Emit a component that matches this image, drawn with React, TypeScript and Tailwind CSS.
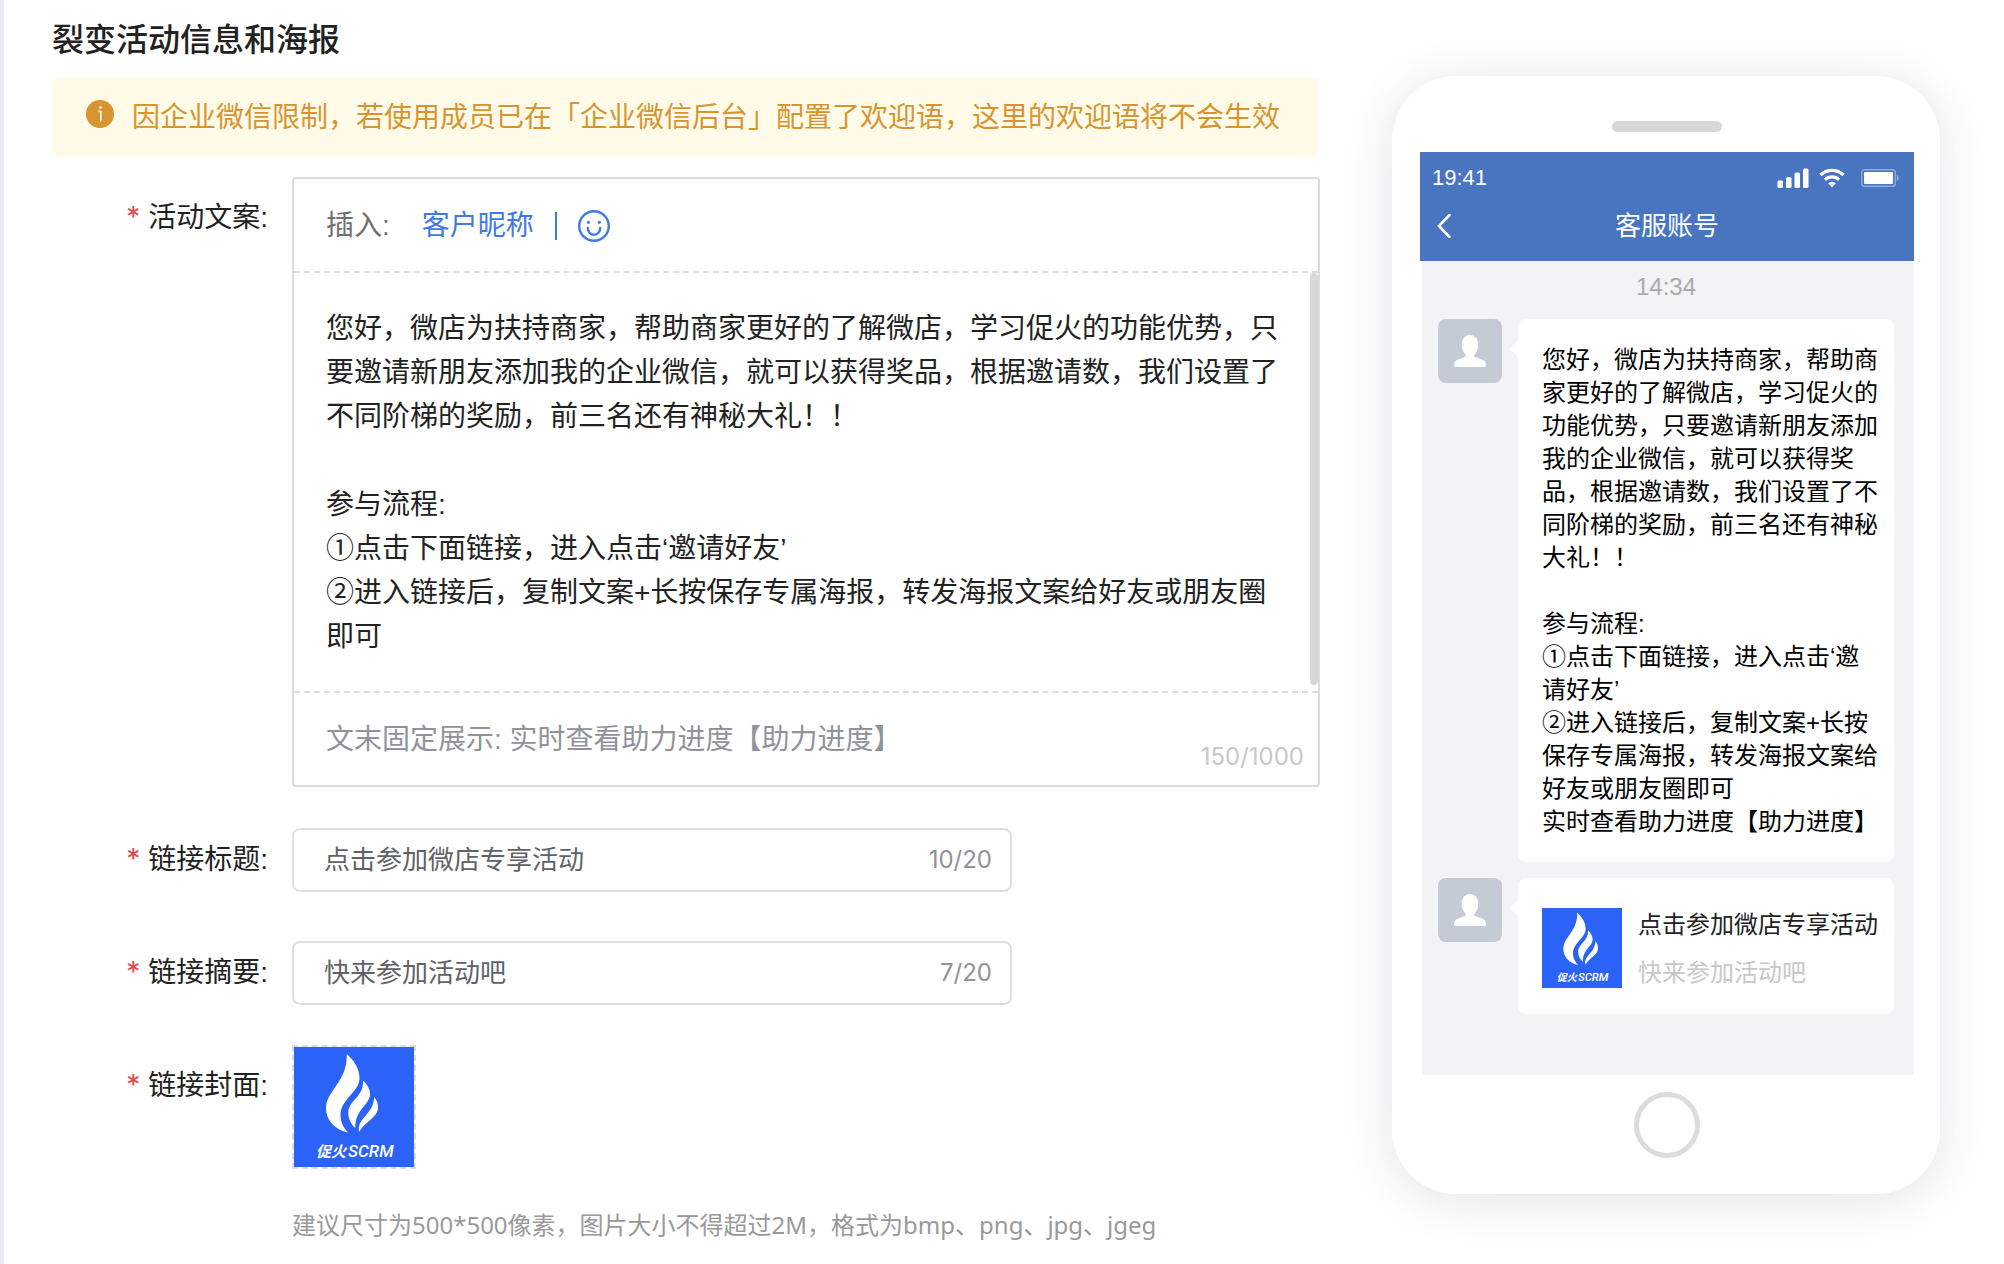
import { useState } from "react";

const initialContent = `您好，微店为扶持商家，帮助商家更好的了解微店，学习促火的功能优势，只要邀请新朋友添加我的企业微信，就可以获得奖品，根据邀请数，我们设置了不同阶梯的奖励，前三名还有神秘大礼！！

参与流程:
①点击下面链接，进入点击‘邀请好友’
②进入链接后，复制文案+长按保存专属海报，转发海报文案给好友或朋友圈即可`;

const fixedEnding = "实时查看助力进度【助力进度】";

function InfoIcon() {
    return (
        <svg viewBox="0 0 28 28" className="mb-1.5 h-7 w-7 shrink-0" aria-hidden="true">
            <circle cx="14" cy="14" r="14" fill="#d8942f" />
            <circle cx="14.5" cy="7.5" r="1.3" fill="#fff" />
            <path d="M12.5 11.5h2.3v10" fill="none" stroke="#fff" strokeWidth="1.6" />
        </svg>
    );
}

function SmileIcon() {
    return (
        <svg viewBox="0 0 32 32" className="h-8 w-8" fill="none" stroke="currentColor" strokeWidth="2.4" aria-hidden="true">
            <circle cx="16" cy="16" r="14.8" />
            <path d="M9.8 18a6.2 6.8 0 0 0 12.4 0" strokeLinecap="round" />
            <circle cx="10.4" cy="12.3" r="1.6" fill="currentColor" stroke="none" />
            <circle cx="21.4" cy="12.3" r="1.6" fill="currentColor" stroke="none" />
        </svg>
    );
}

function BrandLogo({ className }: { className: string }) {
    return (
        <svg viewBox="0 0 120 120" className={className} role="img" aria-label="促火SCRM">
            <rect width="120" height="120" fill="#2b62f7" />
            <g fill="#fff">
                <path d="M52.7 7C60 13 65.5 22 65.5 31C65.5 45 46.5 52 46.5 68C46.5 76 50 81 54 85.5C42 83 32 74 32 61C32 44 54 34 52.7 7Z" />
                <path d="M69 33.7C73 37 76 42 76 47C76 58 61 62 61.3 81C57 77 54.3 72 54.3 66C54.3 53 70 50 69 33.7Z" />
                <path d="M80 50C83 53 84.2 57 84 61C83.5 71 70 75 65.3 85C62 71 80.5 67 80 50Z" />
                <text x="22" y="110" fontSize="15" fontStyle="italic" fontWeight="700" fontFamily="'Noto Sans CJK SC', sans-serif">促火</text>
                <text x="54" y="110" fontSize="17" fontStyle="italic" fontWeight="500" fontFamily="Roboto, sans-serif">SCRM</text>
            </g>
        </svg>
    );
}

function StatusIcons() {
    return (
        <div className="flex items-center pt-0.5 text-white">
            <svg viewBox="0 0 32 20" className="mr-2.5 h-5 w-8" fill="currentColor" aria-hidden="true">
                <rect x="0.5" y="12.5" width="5.5" height="7.5" rx="1.5" />
                <rect x="9" y="9" width="5.5" height="11" rx="1.5" />
                <rect x="17.5" y="4.5" width="5.5" height="15.5" rx="1.5" />
                <rect x="26" y="0.5" width="5.5" height="19.5" rx="1.5" />
            </svg>
            <svg viewBox="0 0 26 20" className="mr-4 h-5 w-[26px]" fill="none" stroke="currentColor" aria-hidden="true">
                <path d="M1.5 7a16.5 16.5 0 0 1 23 0" strokeWidth="3.4" />
                <path d="M6 11.8a10 10 0 0 1 14 0" strokeWidth="3.2" />
                <path d="M13 19.5l-3.8-4.2a5.5 5.5 0 0 1 7.6 0z" fill="currentColor" stroke="none" />
            </svg>
            <svg viewBox="0 0 38 18" className="h-[18px] w-[38px]" aria-hidden="true">
                <rect x="0.8" y="0.8" width="33.4" height="16.4" rx="2.5" fill="none" stroke="#fff" strokeOpacity="0.4" strokeWidth="1.4" />
                <rect x="3" y="3" width="29" height="12" rx="1" fill="#fff" />
                <path d="M36 6c2.2 1 2.2 5 0 6z" fill="#fff" fillOpacity="0.45" />
            </svg>
        </div>
    );
}

function Avatar() {
    return (
        <div className="flex h-16 w-16 shrink-0 items-center justify-center rounded-lg bg-[#c5cbd5]">
            <svg viewBox="0 0 32 32" className="h-8 w-8" fill="#fff" aria-hidden="true">
                <path d="M16 0c5 0 8.3 4.3 8.3 10 0 4.6-2 7.6-4 10-.6 1 0 1.700 1 2.100l6.500 2.500C31 26 32 27.500 32 30c0 1.300-.7 2-2 2H2c-1.300 0-2-.7-2-2 0-2.500 1-4 4.200-5.400l6.500-2.500c1-.4 1.600-1.100 1-2.100-2-2.400-4-5.400-4-10C7.700 4.300 11 0 16 0z" />
            </svg>
        </div>
    );
}

function Message({ children }: { children: React.ReactNode }) {
    return (
        <div className="flex">
            <Avatar />
            {/* Bubble arrow */}
            <svg viewBox="0 0 8 16" className="mt-[22px] ml-2 h-4 w-2 shrink-0" fill="#fff" aria-hidden="true">
                <path d="M8 0v16L0 8z" />
            </svg>
            <div className="min-w-0 flex-1 rounded-lg bg-white">{children}</div>
        </div>
    );
}

function FieldLabel({ htmlFor, tall, children }: { htmlFor: string; tall?: boolean; children: string }) {
    return (
        <label
            htmlFor={htmlFor}
            className={`w-60 shrink-0 pr-6 text-right text-[28px] text-[#222] ${tall ? "leading-[82px]" : "leading-[64px]"}`}
        >
            <span className="mr-2 font-[Inter,sans-serif] leading-none text-[#e04b4b]">*</span>
            {children}:
        </label>
    );
}

interface CountedInputProps {
    id: string;
    value: string;
    onChange: (value: string) => void;
}

function CountedInput({ id, value, onChange }: CountedInputProps) {
    return (
        <div className="flex h-16 w-[720px] items-center rounded-lg border-2 border-[#dcdfe6] pr-[18px] pl-[30px]">
            <input
                id={id}
                type="text"
                maxLength={20}
                value={value}
                onChange={(e) => onChange(e.target.value)}
                className="min-w-0 flex-1 bg-transparent text-[26px] text-[#606266] outline-none"
            />
            <span className="font-[Inter,sans-serif] text-2xl text-[#909399]">{value.length}/20</span>
        </div>
    );
}

interface PhonePreviewProps {
    content: string;
    title: string;
    summary: string;
}

function PhonePreview({ content, title, summary }: PhonePreviewProps) {
    return (
        <aside className="mt-[76px] flex w-[548px] shrink-0 flex-col items-center self-start rounded-[64px] bg-white pr-[26px] pb-9 pl-7 shadow-[0_6px_48px_rgba(30,35,60,0.13)]">
            <div className="mt-[45px] h-[11px] w-[110px] rounded-full bg-[#d8d8d8]" />

            <div className="mt-5 w-full">
                <header className="h-[109px] bg-[#4874c0] text-white">
                    <div className="flex h-[50px] items-center justify-between pr-[15px] pl-3">
                        <span className="text-[22px]">19:41</span>
                        <StatusIcons />
                    </div>
                    <div className="grid h-12 grid-cols-[64px_1fr_64px] items-center">
                        <button type="button" aria-label="返回" className="pl-4">
                            <svg viewBox="0 0 16 24" className="h-6 w-4" fill="none" stroke="currentColor" strokeWidth="2.6" aria-hidden="true">
                                <path d="M13.5 1L3 12l10.5 11" strokeLinecap="round" />
                            </svg>
                        </button>
                        <h2 className="text-center text-[26px]">客服账号</h2>
                    </div>
                </header>

                <div className="ml-0.5 bg-[#f3f3f6] pr-5 pb-[61px] pl-4">
                    <p className="h-[58px] text-center text-2xl leading-[52px] text-[#aaa]">14:34</p>
                    <div className="flex flex-col gap-4">
                        <Message>
                            <p className="py-6 pr-4 pl-6 text-2xl leading-[33px] whitespace-pre-wrap text-black">
                                {content}
                                {"\n"}
                                {fixedEnding}
                            </p>
                        </Message>
                        <Message>
                            <div className="flex gap-4 pt-[30px] pr-4 pb-6 pl-6">
                                <BrandLogo className="h-20 w-20 shrink-0" />
                                <div className="flex min-w-0 flex-col gap-3.5 text-2xl leading-[34px]">
                                    <p className="truncate text-[#222]">{title}</p>
                                    <p className="truncate text-[#c8c8c8]">{summary}</p>
                                </div>
                            </div>
                        </Message>
                    </div>
                </div>
            </div>

            <div className="mt-[17px] h-[66px] w-[66px] rounded-full border-[5px] border-[#dcdcdc]" />
        </aside>
    );
}

export default function App() {
    const [content, setContent] = useState(initialContent);
    const [title, setTitle] = useState("点击参加微店专享活动");
    const [summary, setSummary] = useState("快来参加活动吧");

    return (
        <div className="flex min-h-screen gap-[72px] border-l-4 border-[#ebebf1] bg-white pr-16 pl-12 font-['Liberation_Sans','Noto_Sans_CJK_SC',sans-serif]">
            <main className="min-w-0 flex-1 pt-[18px] pb-5">
                <h1 className="text-[32px] leading-11 font-medium text-[#222]">裂变活动信息和海报</h1>

                {/* Notice */}
                <div className="mt-[15px] mr-0.5 flex h-20 items-center gap-[18px] rounded-lg bg-[#fffbe8] pl-[34px]">
                    <InfoIcon />
                    <p className="pt-0.5 text-[28px] text-[#d8942f]">
                        因企业微信限制，若使用成员已在「企业微信后台」配置了欢迎语，这里的欢迎语将不会生效
                    </p>
                </div>

                {/* Message editor */}
                <div className="mt-5 flex">
                    <FieldLabel htmlFor="content" tall>活动文案</FieldLabel>
                    <div className="min-w-0 flex-1 rounded border-2 border-[#dcdcdc]">
                        <div className="flex h-[94px] items-center border-b-2 border-dashed border-[#dcdcdc] pt-0.5 pl-8 text-[28px] text-[#4179e8]">
                            <span className="text-[#707070]">插入:</span>
                            <button type="button" className="ml-8">客户昵称</button>
                            <span className="mx-[21px] h-7 w-0.5 bg-[#4179e8]" />
                            <button type="button" aria-label="表情">
                                <SmileIcon />
                            </button>
                        </div>
                        <div className="relative">
                            <textarea
                                id="content"
                                value={content}
                                onChange={(e) => setContent(e.target.value)}
                                className="block h-[418px] w-full resize-none overflow-hidden px-8 pt-[34px] text-[28px] leading-11 text-[#222] outline-none"
                            />
                            <div className="absolute top-0 right-0 h-[412px] w-2 rounded-full bg-[#d8d8d8]" />
                        </div>
                        <div className="flex h-[94px] justify-between border-t-2 border-dashed border-[#dcdcdc] pr-3.5 pl-8">
                            <span className="text-[28px] leading-[94px] text-[#909399]">文末固定展示: {fixedEnding}</span>
                            <span className="self-end pb-3 font-[Inter,sans-serif] text-2xl text-[#c8c8c8]">150/1000</span>
                        </div>
                    </div>
                </div>

                <div className="mt-[41px] flex">
                    <FieldLabel htmlFor="title">链接标题</FieldLabel>
                    <CountedInput id="title" value={title} onChange={setTitle} />
                </div>

                <div className="mt-[49px] flex">
                    <FieldLabel htmlFor="summary">链接摘要</FieldLabel>
                    <CountedInput id="summary" value={summary} onChange={setSummary} />
                </div>

                <div className="mt-10 flex">
                    <FieldLabel htmlFor="cover" tall>链接封面</FieldLabel>
                    <div>
                        <button id="cover" type="button" className="block border-2 border-dashed border-[#dcdcdc]">
                            <BrandLogo className="h-[120px] w-[120px]" />
                        </button>
                        <p className="mt-[38px] font-['Noto_Sans','Noto_Sans_CJK_SC',sans-serif] text-2xl leading-9 text-[#999]">
                            建议尺寸为500*500像素，图片大小不得超过2M，格式为bmp、png、jpg、jgeg
                        </p>
                    </div>
                </div>
            </main>

            <PhonePreview content={content} title={title} summary={summary} />
        </div>
    );
}
